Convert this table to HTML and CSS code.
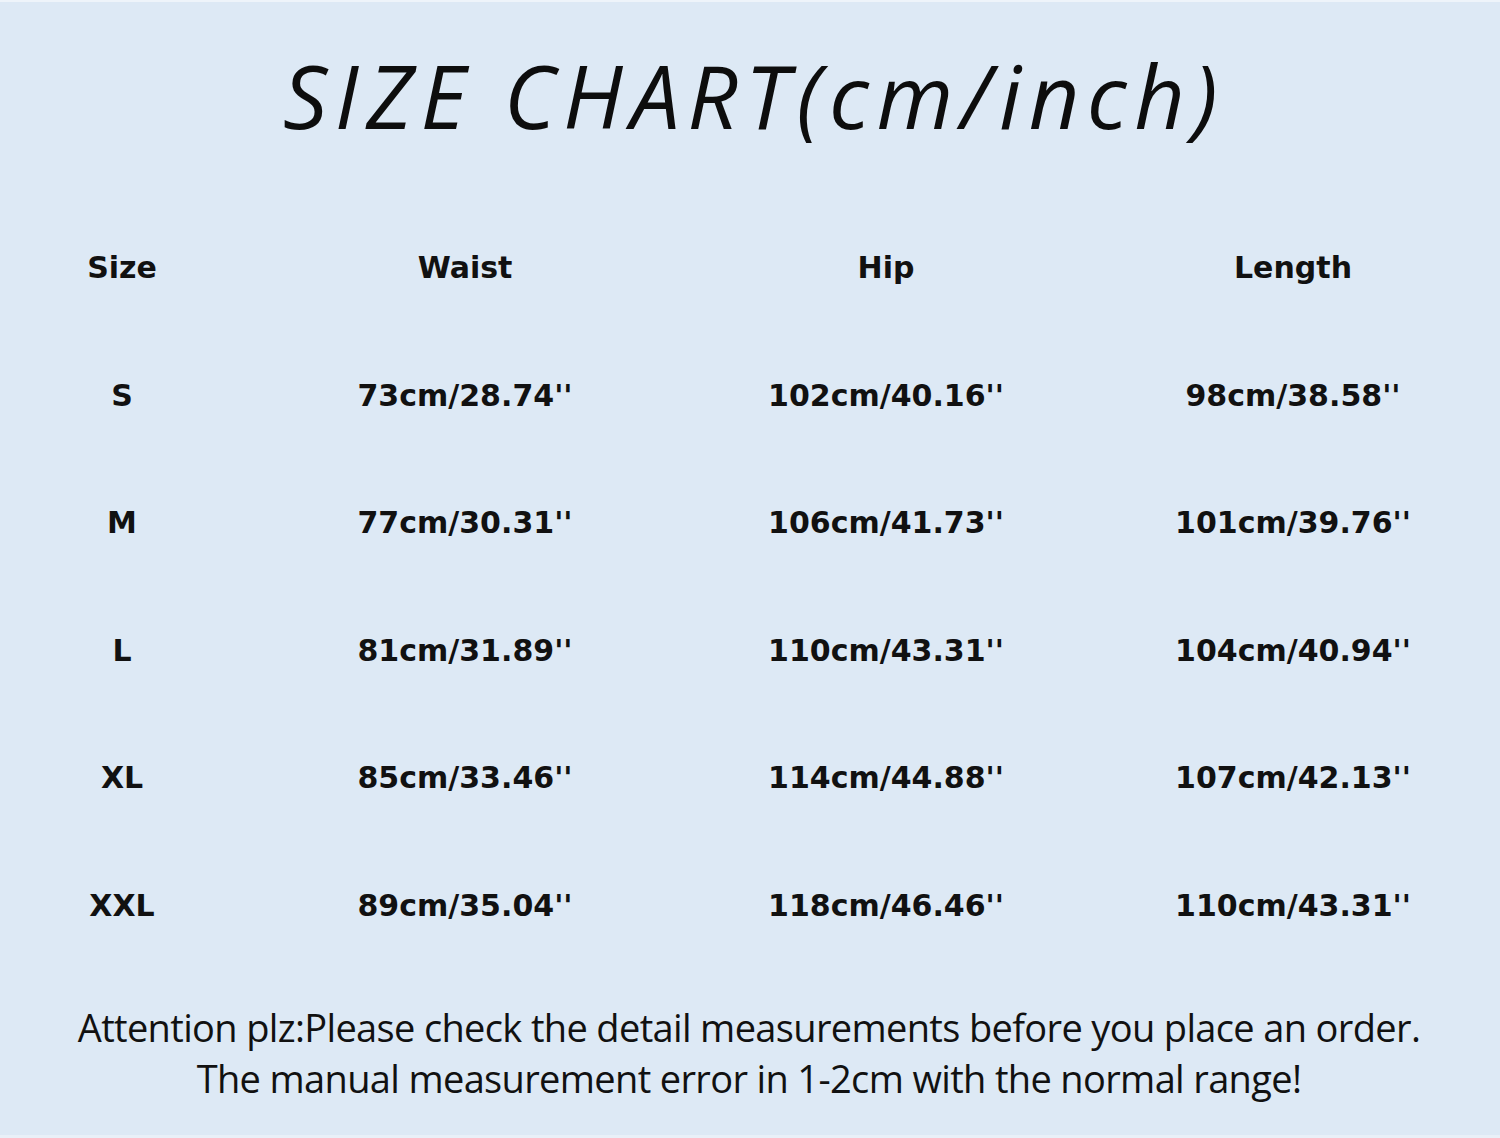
FILE: index.html
```html
<!DOCTYPE html>
<html lang="en">
<head>
<meta charset="utf-8">
<title>Size Chart</title>
<link rel="stylesheet" href="styles.css">
</head>
<body>
<div class="page">
  <header class="title-wrap">
    <h1 class="title">SIZE CHART(cm/inch)</h1>
  </header>
  <div class="chart">
    <div class="cell head">Size</div>
    <div class="cell head">Waist</div>
    <div class="cell head">Hip</div>
    <div class="cell head">Length</div>

    <div class="cell">S</div>
    <div class="cell">73cm/28.74''</div>
    <div class="cell">102cm/40.16''</div>
    <div class="cell">98cm/38.58''</div>

    <div class="cell">M</div>
    <div class="cell">77cm/30.31''</div>
    <div class="cell">106cm/41.73''</div>
    <div class="cell">101cm/39.76''</div>

    <div class="cell">L</div>
    <div class="cell">81cm/31.89''</div>
    <div class="cell">110cm/43.31''</div>
    <div class="cell">104cm/40.94''</div>

    <div class="cell">XL</div>
    <div class="cell">85cm/33.46''</div>
    <div class="cell">114cm/44.88''</div>
    <div class="cell">107cm/42.13''</div>

    <div class="cell">XXL</div>
    <div class="cell">89cm/35.04''</div>
    <div class="cell">118cm/46.46''</div>
    <div class="cell">110cm/43.31''</div>
  </div>
  <footer class="note">
    <p class="note-line">Attention plz:Please check the detail measurements before you place an order.</p>
    <p class="note-line">The manual measurement error in 1-2cm with the normal range!</p>
  </footer>
</div>
</body>
</html>
```
FILE: styles.css
```css
html, body {
  margin: 0;
  padding: 0;
}
body {
  width: 1500px;
  height: 1138px;
  overflow: hidden;
  background: #dde9f5;
}
.page {
  width: 1500px;
  height: 1138px;
  box-sizing: border-box;
  border-top: 2px solid #eef4fa;
  border-bottom: 3px solid #e9f0f8;
  background: #dde9f5;
  color: #111;
  display: flex;
  flex-direction: column;
}
.title-wrap {
  height: 202px;
  display: flex;
  align-items: center;
  justify-content: center;
  box-sizing: border-box;
  padding-bottom: 16px;
}
.title {
  margin: 0;
  padding-left: 8px;
  font-family: "Open Sans", "DejaVu Sans", sans-serif;
  font-weight: 500;
  font-style: italic;
  font-size: 88px;
  line-height: 1;
  letter-spacing: 7.5px;
  word-spacing: 0;
  color: #0d0d0d;
}
.chart {
  display: grid;
  grid-template-columns: 244px 442px 400px 1fr;
  grid-auto-rows: 127.5px;
}
.cell {
  display: flex;
  align-items: center;
  justify-content: center;
  font-family: "DejaVu Sans", "Liberation Sans", sans-serif;
  font-weight: 700;
  font-size: 30px;
  color: #111;
}
.note {
  margin-top: 33px;
  text-align: center;
  padding-right: 2px;
}
.note-line {
  margin: 0;
  height: 51px;
  line-height: 51px;
  font-family: "Open Sans", "Noto Sans", sans-serif;
  font-size: 38px;
  letter-spacing: -0.65px;
  color: #111;
}
```
